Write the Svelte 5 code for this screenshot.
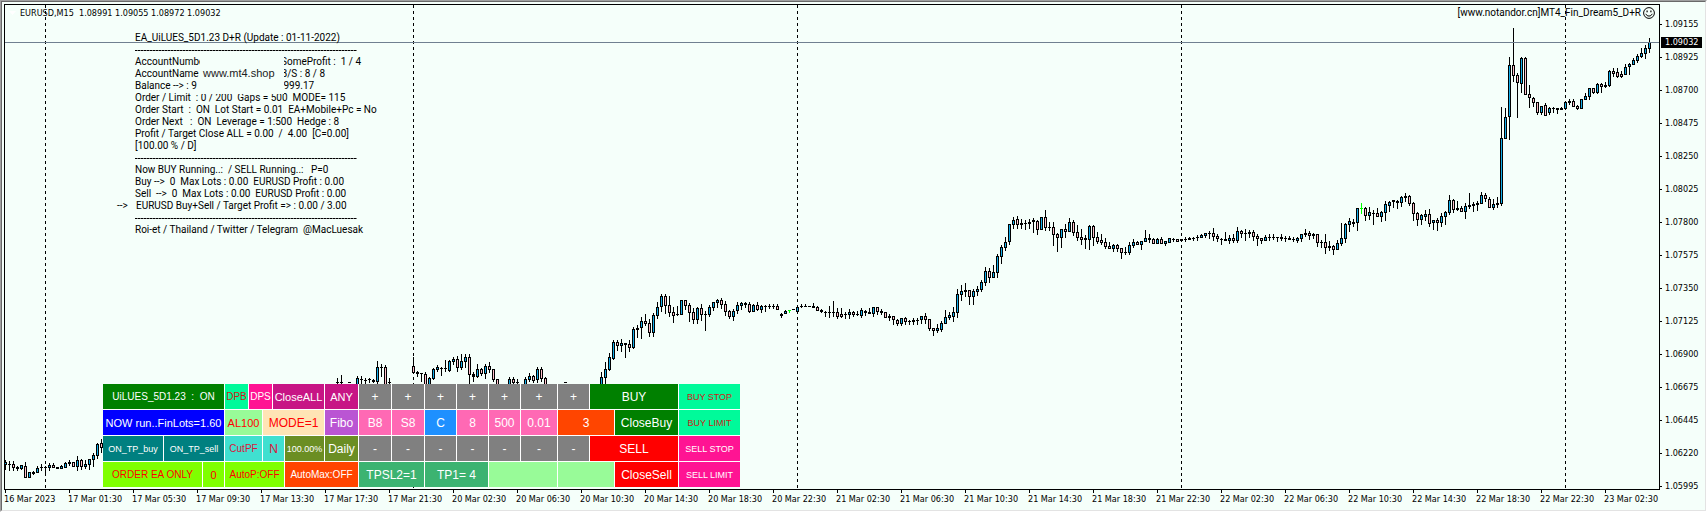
<script lang="ts">
  type Bar = { x: number; high: number; top: number; bottom: number; low: number; kind: string };
  type Cell = { text: string; w: number; look: string; size?: string };

  const STEP = 4;

  // high top bottom low kind (u = up, d = down, k = flat, g = highlighted)
  const runs: { x: number; bars: string }[] = [
    {
      x: 5,
      bars: `460 462 464 469 u,461 464 464 470 k,461 464 467 470 d,466 467 468 470 k,465 465 468 469 u,
        462 466 477 477 d,472 472 477 477 u,471 472 473 474 k,466 468 472 472 u,464 467 467 470 k,
        466 467 467 474 k,463 465 467 470 u,463 465 467 467 d,467 467 468 468 k,465 466 468 468 u,
        462 463 467 467 u,460 462 463 465 k,462 462 466 466 d,456 460 466 470 u,459 460 466 469 d,
        460 464 466 468 u,459 459 464 469 u,453 455 459 466 u,443 444 455 458 u,439 443 447 452 d`,
    },
    { x: 337, bars: `378 382 382 384 k,375 382 382 384 k` },
    {
      x: 349,
      bars: `382 382 382 382 k,384 384 384 384 k,376 378 385 385 u,376 379 379 383 k,378 380 380 383 k,
        378 379 379 382 k,379 380 381 382 k,361 367 381 385 u,364 367 367 376 k,365 367 385 385 d,378 382 382 384 k`,
    },
    {
      x: 413,
      bars: `357 366 372 372 d,371 372 373 376 k,373 373 373 381 k,372 374 385 385 d,377 378 385 385 u,
        368 369 378 379 u,365 367 369 371 u,367 368 368 375 k,360 368 368 371 k,360 361 370 371 u,
        357 359 361 364 u,356 359 367 371 d,354 361 367 369 u,354 357 361 367 u,354 357 374 383 d,
        372 374 376 381 k,364 369 376 377 u,368 369 373 375 d,364 366 373 378 u,362 366 369 372 d,
        369 369 379 381 d,379 379 385 385 d`,
    },
    {
      x: 509,
      bars: `377 379 385 385 u,377 379 382 385 d,379 382 382 384 k,384 384 384 384 k,377 379 385 385 u,
        373 376 379 381 u,375 376 380 382 d,367 369 379 382 u,367 369 378 381 d,377 378 385 385 d`,
    },
    { x: 565, bars: `382 382 382 382 k` },
    {
      x: 601,
      bars: `372 377 385 385 u,362 369 377 383 u,353 357 369 370 u,340 342 358 359 u,340 342 345 350 d,
        339 343 345 351 u,343 343 344 357 k,340 344 347 351 d,327 329 347 348 u,325 328 329 337 k,
        317 321 327 338 u,314 321 323 325 d,319 323 332 336 d,313 315 332 336 u,302 307 315 318 u,
        294 296 306 311 u,294 296 305 313 d,296 305 312 316 d,307 312 315 322 d,306 314 314 315 k,
        300 300 314 314 u,300 300 305 309 d,303 305 312 321 d,308 312 319 323 d,307 308 319 323 u,
        304 308 314 320 d,311 314 314 330 k,305 307 314 316 u,302 302 307 310 u,299 300 302 307 u,
        298 300 304 308 d,301 304 311 315 d,310 311 316 318 d,309 311 316 320 u,302 305 310 313 u,
        302 303 305 309 u,302 303 304 307 k,302 304 311 312 d,304 305 311 311 u,302 305 309 310 d,
        305 306 309 312 u,305 306 306 311 k,304 306 306 308 k,304 306 306 308 k,304 306 309 309 d,
        313 314 315 317 k,310 311 313 313 u,310 310 310 312 g,309 309 309 309 k,306 307 311 312 u,
        304 306 306 307 k,304 306 306 306 k,306 306 306 306 k,303 306 307 307 k,306 307 310 310 d,
        309 310 311 312 k,311 312 312 316 k,306 312 312 317 k,301 312 312 316 k,308 312 316 318 d,
        308 314 316 317 d,312 314 314 318 k,309 312 314 318 u,311 312 314 316 d,311 314 314 315 k,
        308 310 315 317 u,310 311 312 315 k,308 312 313 313 k,307 307 313 316 u,307 307 311 314 d,
        309 311 312 314 k,312 312 317 317 d,314 316 317 320 k,316 316 319 324 d,319 320 323 325 d,
        318 318 323 325 u,317 318 321 324 d,320 321 321 324 k,318 320 321 324 k,318 320 320 324 k,
        316 316 319 323 u,313 316 319 323 d,319 319 328 330 d,328 328 330 335 d,324 328 330 332 u,
        321 323 329 331 u,310 317 323 323 u,312 315 317 319 u,307 312 316 321 u,289 294 312 317 u,
        285 291 294 300 u,283 290 291 296 k,290 290 296 304 d,289 291 296 304 u,286 289 291 295 u,
        280 282 289 291 u,267 271 282 285 u,268 271 277 282 d,265 272 277 277 u,254 256 272 277 u,
        245 247 256 263 u,237 242 247 250 u,224 224 241 244 u,217 220 224 228 u,216 219 224 228 d,
        219 223 224 228 k,220 223 223 229 k,219 222 223 228 k,218 220 221 232 k,220 221 229 234 d,
        217 217 229 229 u,210 217 227 230 d,222 227 227 230 k,222 227 234 245 d,233 234 237 251 d,
        229 229 237 247 u,224 229 231 237 d,218 222 231 231 u,220 222 232 235 d,225 232 237 240 d,
        229 237 239 244 d,235 238 239 248 k,225 226 239 249 u,225 226 237 245 d,232 237 241 243 d,
        234 240 242 244 d,238 242 246 248 d,242 246 248 248 d,244 245 248 251 u,244 245 248 251 d,
        248 248 252 258 d,247 252 252 254 k,242 245 252 254 u,239 242 245 247 u,241 242 244 244 d,
        241 241 244 249 u,230 238 241 241 u,234 238 239 242 k,238 239 243 243 d,238 239 243 243 u,
        237 239 243 243 d,241 241 243 245 u,238 238 242 242 u,238 239 239 241 k,239 239 241 241 d,
        239 239 240 240 k,237 239 239 241 k,237 238 239 239 k,237 238 238 240 k,235 237 237 240 k,
        234 235 237 237 u,233 233 235 237 u,231 233 233 238 k,228 233 236 240 d,234 236 238 241 d,
        238 239 239 244 k,232 239 240 240 k,235 238 240 243 u,234 238 240 242 d,227 231 240 242 u,
        230 231 233 237 d,229 233 233 240 k,230 232 233 237 k,230 232 236 240 d,234 236 238 245 d,
        238 238 240 243 d,235 237 240 240 u,234 237 237 240 k,234 237 237 239 k,237 237 237 241 k,
        234 237 238 240 k,236 238 238 241 k,236 238 239 239 k,237 239 239 241 k,237 238 240 242 u,
        234 234 238 241 u,229 233 234 236 k,231 233 235 239 d,233 234 235 238 k,234 234 242 246 d,
        240 242 242 247 k,234 242 247 253 d,241 246 247 250 k,245 246 249 254 d,240 243 249 249 u,
        223 238 243 245 u,223 224 238 242 u,218 221 224 231 u,219 222 223 226 k,208 208 222 230 u,
        203 208 208 213 g,207 208 215 220 d,207 212 215 219 u,210 213 213 224 k,208 213 216 216 d,
        211 212 216 221 u,201 204 212 220 u,201 202 205 211 u,200 200 201 207 k,200 201 202 208 k,
        196 197 202 206 u,193 196 197 201 k,195 196 203 205 d,202 203 213 220 d,212 213 219 225 d,
        214 215 219 224 u,210 214 216 220 u,209 214 223 226 d,220 220 222 229 u,218 220 222 230 d,
        213 216 222 226 u,211 212 216 224 u,195 200 212 214 u,199 200 209 212 d,201 208 209 210 k,
        206 208 211 211 d,203 206 211 218 u,193 205 206 208 k,202 204 205 211 k,201 203 204 210 k,
        192 195 203 203 u,193 195 198 201 d,197 199 207 207 d,199 204 207 209 u,197 203 204 207 k,
        107 138 203 205 u,108 117 138 138 u,57 65 116 139 u,28 65 75 81 d,73 75 82 117 d,
        57 58 83 92 u,57 58 94 94 d,85 94 97 107 d,97 98 102 106 d,102 102 112 114 d,
        106 106 112 114 u,103 105 115 115 d,107 108 112 114 u,107 108 108 112 k,108 108 109 113 k,
        107 108 109 109 k,102 102 108 108 u,99 101 102 104 k,99 101 106 106 d,105 106 108 109 d,
        99 99 108 108 u,93 96 99 99 u,88 88 96 99 u,88 88 92 93 d,83 84 92 93 u,
        83 84 86 92 d,82 85 86 87 k,70 71 85 86 u,68 71 73 76 d,68 72 76 77 d,
        71 74 76 77 d,64 67 74 74 u,63 64 66 74 u,58 60 64 64 u,54 56 60 62 u,
        48 53 56 57 u,45 48 53 58 u,38 42 48 52 u`,
    },
  ];

  const bars: Bar[] = runs.flatMap((run) =>
    run.bars.split(",").map((row, i) => {
      const [high, top, bottom, low, kind] = row.trim().split(" ");
      return { x: run.x + i * STEP, high: +high, top: +top, bottom: +bottom, low: +low, kind };
    }),
  );

  const daySeparators = [45, 413, 797, 1181, 1565];

  const prices = [
    "1.09155", "1.08925", "1.08700", "1.08475", "1.08250", "1.08025", "1.07800", "1.07575",
    "1.07350", "1.07125", "1.06900", "1.06675", "1.06445", "1.06220", "1.05995",
  ];

  const times = [
    "16 Mar 2023", "17 Mar 01:30", "17 Mar 05:30", "17 Mar 09:30", "17 Mar 13:30", "17 Mar 17:30",
    "17 Mar 21:30", "20 Mar 02:30", "20 Mar 06:30", "20 Mar 10:30", "20 Mar 14:30", "20 Mar 18:30",
    "20 Mar 22:30", "21 Mar 02:30", "21 Mar 06:30", "21 Mar 10:30", "21 Mar 14:30", "21 Mar 18:30",
    "21 Mar 22:30", "22 Mar 02:30", "22 Mar 06:30", "22 Mar 10:30", "22 Mar 14:30", "22 Mar 18:30",
    "22 Mar 22:30", "23 Mar 02:30",
  ];

  const account = [
    ["AccountNumbe", "SomeProfit :  1 / 4"],
    ["AccountName", "B/S : 8 / 8"],
    ["Balance --> : 9", " 999.17"],
  ];

  const settings = [
    "Order / Limit  : 0 / 200  Gaps = 500  MODE= 115",
    "Order Start  :  ON  Lot Start = 0.01  EA+Mobile+Pc = No",
    "Order Next   :  ON  Leverage = 1:500  Hedge : 8",
    "Profit / Target Close ALL = 0.00  /  4.00  [C=0.00]",
    "[100.00 % / D]",
  ];

  const running = [
    "Now BUY Running..:  / SELL Running..:   P=0",
    "Buy -->  0  Max Lots : 0.00  EURUSD Profit : 0.00",
    "Sell  -->  0  Max Lots : 0.00  EURUSD Profit : 0.00",
  ];

  function steppers(sign: string): Cell[] {
    return [33, 33, 32, 32, 32, 37, 32].map((w) => ({ text: sign, w, look: "gray", size: "lg" }));
  }

  const panel: Cell[][] = [
    [
      { text: "UiLUES_5D1.23  :  ON", w: 122, look: "green" },
      { text: "DPB", w: 24, look: "spring" },
      { text: "DPS", w: 24, look: "pink" },
      { text: "CloseALL", w: 52, look: "violet", size: "md" },
      { text: "ANY", w: 34, look: "violet", size: "md" },
      ...steppers("+"),
      { text: "BUY", w: 89, look: "green", size: "lg" },
      { text: "BUY STOP", w: 62, look: "spring", size: "sm" },
    ],
    [
      { text: "NOW run..FinLots=1.60", w: 122, look: "blue", size: "md" },
      { text: "AL100", w: 38, look: "pale", size: "md" },
      { text: "MODE=1", w: 62, look: "moccasin", size: "lg" },
      { text: "Fibo", w: 34, look: "orchid", size: "lg" },
      { text: "B8", w: 33, look: "hotpink", size: "lg" },
      { text: "S8", w: 33, look: "hotpink", size: "lg" },
      { text: "C", w: 32, look: "dodger", size: "lg" },
      { text: "8", w: 32, look: "hotpink", size: "lg" },
      { text: "500", w: 32, look: "hotpink", size: "lg" },
      { text: "0.01", w: 37, look: "hotpink", size: "lg" },
      { text: "3", w: 57, look: "orange", size: "lg" },
      { text: "CloseBuy", w: 64, look: "green", size: "lg" },
      { text: "BUY LIMIT", w: 62, look: "spring", size: "sm" },
    ],
    [
      { text: "ON_TP_buy", w: 61, look: "teal", size: "sm" },
      { text: "ON_TP_sell", w: 61, look: "teal", size: "sm" },
      { text: "CutPF", w: 38, look: "turquoise" },
      { text: "N", w: 22, look: "turquoise", size: "lg" },
      { text: "100.00%", w: 40, look: "olive", size: "sm" },
      { text: "Daily", w: 34, look: "olive", size: "lg" },
      ...steppers("-"),
      { text: "SELL", w: 89, look: "red", size: "lg" },
      { text: "SELL STOP", w: 62, look: "pink", size: "sm" },
    ],
    [
      { text: "ORDER EA ONLY", w: 100, look: "lime" },
      { text: "0", w: 22, look: "lime", size: "md" },
      { text: "AutoP:OFF", w: 60, look: "lime" },
      { text: "AutoMax:OFF", w: 74, look: "orange" },
      { text: "TPSL2=1", w: 66, look: "sea", size: "lg" },
      { text: "TP1= 4", w: 64, look: "sea", size: "lg" },
      { text: "", w: 69, look: "pale" },
      { text: "", w: 57, look: "pale" },
      { text: "CloseSell", w: 64, look: "red", size: "lg" },
      { text: "SELL LIMIT", w: 62, look: "pink", size: "sm" },
    ],
  ];
</script>

<main class="window">
  <div class="chart">
    <section class="plot">
      <svg class="candles" aria-hidden="true">
        <g transform="translate(-5 -5)" shape-rendering="crispEdges">
          {#each daySeparators as x (x)}
            <line x1={x + 0.5} x2={x + 0.5} y1="5" y2="488" stroke="#000" stroke-dasharray="3 3" />
          {/each}
          {#each bars as bar (bar.x)}
            <g class={bar.kind}>
              <rect x={bar.x} y={bar.high} width="1" height={bar.low - bar.high + 1} />
              <rect x={bar.x - 1} y={bar.top} width="3" height={bar.bottom - bar.top + 1} />
              {#if bar.bottom - bar.top > 1}
                <rect class="fill" x={bar.x} y={bar.top + 1} width="1" height={bar.bottom - bar.top - 1} />
              {/if}
            </g>
          {/each}
          <rect class="bid" x="5" y="42" width="100%" height="1" />
        </g>
      </svg>

      <div class="overlay">
        <header>
          <span class="symbol">
            <svg width="7" height="4" viewBox="0 0 7 4" aria-hidden="true"><path d="M0 0h7L3.5 4z" fill="#fff" /></svg>
            <span>EURUSD,M15  1.08991 1.09055 1.08972 1.09032</span>
          </span>
          <span class="expert">
            <span>[www.notandor.cn]MT4_Fin_Dream5_D+R</span>
            <svg width="12" height="12" viewBox="0 0 12 12" aria-hidden="true">
              <circle cx="6" cy="6" r="5.4" fill="none" stroke="#000" />
              <rect x="3.5" y="3.5" width="1.2" height="1.8" />
              <rect x="7.3" y="3.5" width="1.2" height="1.8" />
              <path d="M2.8 6.8C3.8 9.8 8.2 9.8 9.2 6.8" fill="none" stroke="#000" />
            </svg>
          </span>
        </header>

        <div class="comment">
          <p>EA_UiLUES_5D1.23 D+R (Update : 01-11-2022)</p>
          <hr />
          <div class="account">
            {#each account as [left, right]}
              <p class="split"><span class="left">{left}</span><span>{right}</span></p>
            {/each}
            <div class="watermark">www.mt4.shop</div>
          </div>
          {#each settings as line}
            <p>{line}</p>
          {/each}
          <hr />
          {#each running as line}
            <p>{line}</p>
          {/each}
          <p class="total"><span class="arrow">--&gt;</span>EURUSD Buy+Sell / Target Profit =&gt; : 0.00 / 3.00</p>
          <hr />
          <p>Roi-et / Thailand / Twitter / Telegram  @MacLuesak</p>
        </div>

        <div class="panel">
          {#each panel as row}
            <div class="row">
              {#each row as cell}
                <button type="button" class="{cell.look} {cell.size ?? ''}" style="width: {cell.w - 1}px">{cell.text}</button>
              {/each}
            </div>
          {/each}
        </div>
      </div>
    </section>

    <aside class="price-axis">
      {#each prices as price (price)}
        <span>{price}</span>
      {/each}
      <strong class="price-tag">1.09032</strong>
    </aside>

    <footer class="time-axis">
      {#each times as time (time)}
        <span>{time}</span>
      {/each}
    </footer>
  </div>
</main>

<style>
  :global(body) {
    margin: 0;
    background: #fff;
  }

  .window {
    border: 1px solid;
    border-color: #a0a0a0 #fff #fff #a0a0a0;
    font: 9px/12px "DejaVu Sans Condensed", "DejaVu Sans", sans-serif;
    font-stretch: condensed;
    color: #000;
  }

  .chart {
    display: grid;
    grid-template-columns: minmax(0, 1fr) 45px;
    grid-template-rows: 1fr 20px;
    padding: 2px 0 0 2px;
    border: 1px solid;
    border-color: #696969 #e3e3e3 #e3e3e3 #696969;
    background: #f5fffa;
  }

  .plot {
    position: relative;
    border: 1px solid #000;
    overflow: hidden;
  }

  .candles {
    position: absolute;
    inset: 0;
    width: 100%;
    height: 100%;
  }

  .u .fill {
    fill: #12aeea;
  }

  .d .fill {
    fill: #ffc0cb;
  }

  .g {
    fill: #00ff00;
  }

  .bid {
    fill: #708090;
  }

  .overlay {
    position: relative;
    display: flex;
    flex-direction: column;
    height: 100%;
  }

  header {
    display: flex;
    justify-content: space-between;
    padding: 2px 4px 0 4px;
  }

  header span {
    white-space: pre;
  }

  .symbol,
  .expert {
    display: flex;
    align-items: center;
  }

  .symbol {
    gap: 4px;
  }

  .expert {
    gap: 2px;
  }

  .expert,
  .comment {
    font-family: Roboto, "DejaVu Sans Condensed", sans-serif;
    font-size: 10px;
    font-stretch: normal;
  }

  .comment {
    align-self: flex-start;
    margin: 13px 0 0 130px;
  }

  p {
    margin: 0;
    height: 12px;
    white-space: pre;
  }

  hr {
    box-sizing: border-box;
    width: 222px;
    height: 12px;
    margin: 0;
    border: 0;
    background: repeating-linear-gradient(90deg, #000 0 2px, #777 2px 3px) 0 6px / 100% 1px no-repeat;
  }

  .account {
    position: relative;
  }

  .split {
    display: flex;
  }

  .left {
    width: 65px;
    margin-right: 81px;
  }

  .watermark {
    position: absolute;
    top: 0;
    left: 65px;
    box-sizing: border-box;
    width: 84px;
    height: 38px;
    padding-left: 3px;
    background: #f5fffa;
    color: #222;
    font: 11px/34px "Liberation Sans", Arial, sans-serif;
  }

  .total {
    display: flex;
    margin-left: -18px;
  }

  .arrow {
    width: 19px;
  }

  .panel {
    display: flex;
    flex-direction: column;
    gap: 1px;
    align-self: flex-start;
    margin: auto 0 2px 98px;
    background: #fff;
  }

  .row {
    display: flex;
    gap: 1px;
  }

  button {
    box-sizing: border-box;
    height: 25px;
    padding: 1px 0 0;
    border: 0;
    color: #fff;
    font: 10px/24px "Liberation Sans", Arial, sans-serif;
    text-align: center;
    white-space: pre;
  }

  .sm { font-size: 9px; }
  .md { font-size: 11px; }
  .lg { font-size: 12px; }

  .green { background: #008000; }
  .spring { background: #00fa9a; color: #d01818; }
  .pink { background: #ff1493; }
  .violet { background: #c71585; }
  .gray { background: #808080; }
  .blue { background: #0000ff; }
  .pale { background: #98fb98; color: #ff0000; }
  .moccasin { background: #ffe4b5; color: #ff0000; }
  .orchid { background: #ba55d3; }
  .hotpink { background: #ff69b4; }
  .dodger { background: #1e90ff; }
  .orange { background: #ff4500; }
  .teal { background: #008080; }
  .turquoise { background: #40e0d0; color: #dc143c; }
  .olive { background: #6b8e23; }
  .lime { background: #7fff00; color: #ff0000; }
  .sea { background: #3cb371; }
  .red { background: #ff0000; }

  .price-axis {
    position: relative;
    grid-column: 2;
    grid-row: 1 / 3;
    display: flex;
    flex-direction: column;
    gap: 21px;
    padding: 14px 0 18px;
  }

  .price-axis span {
    display: flex;
    align-items: center;
    gap: 3px;
  }

  .price-axis span::before {
    content: "";
    width: 2px;
    height: 1px;
    background: #000;
  }

  .price-tag {
    position: absolute;
    top: 33px;
    left: 1px;
    width: 37px;
    padding-left: 4px;
    background: #000;
    color: #fff;
    font-weight: normal;
    line-height: 11px;
  }

  .time-axis {
    display: flex;
    overflow: hidden;
    white-space: nowrap;
  }

  .time-axis span {
    flex: 0 0 64px;
  }

  .time-axis span::before {
    content: "";
    display: block;
    width: 1px;
    height: 3px;
    margin-left: 1px;
    background: #000;
  }
</style>
